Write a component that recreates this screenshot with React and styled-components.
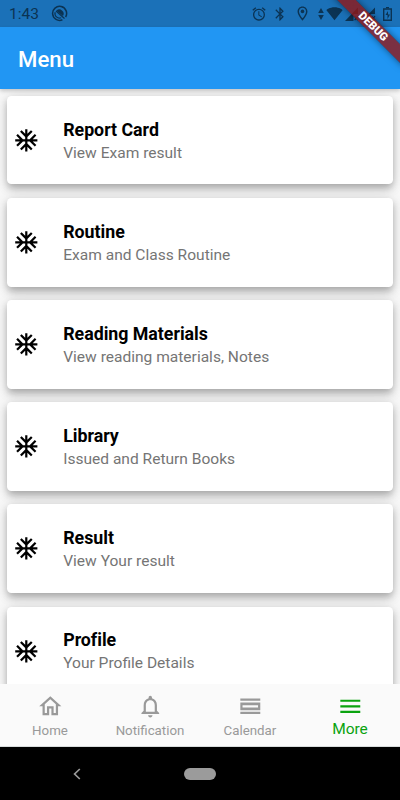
import React from "react";
import styled, { createGlobalStyle } from "styled-components";
import {
  MdAcUnit,
  MdOutlineHome,
  MdNotificationsNone,
  MdMenu,
  MdAlarm,
  MdBluetooth,
  MdOutlineLocationOn,
  MdSignalWifi4Bar,
} from "react-icons/md";

const menuItems = [
  { title: "Report Card", text: "View Exam result" },
  { title: "Routine", text: "Exam and Class Routine" },
  { title: "Reading Materials", text: "View reading materials, Notes" },
  { title: "Library", text: "Issued and Return Books" },
  { title: "Result", text: "View Your result" },
  { title: "Profile", text: "Your Profile Details" },
];

const tabs = [
  { label: "Home", icon: <MdOutlineHome /> },
  { label: "Notification", icon: <MdNotificationsNone /> },
  { label: "Calendar", icon: <CalendarIcon /> },
  { label: "More", icon: <MdMenu />, active: true },
];

export default function App() {
  return (
    <Screen>
      <GlobalStyle />
      <StatusBar>
        <Clock>1:43</Clock>
        <AppMark />
        <StatusIcons />
      </StatusBar>
      <Header>
        <HeaderTitle>Menu</HeaderTitle>
      </Header>
      <List>
        {menuItems.map((item) => (
          <Card key={item.title}>
            <CardIcon>
              <MdAcUnit />
            </CardIcon>
            <CardBody>
              <CardTitle>{item.title}</CardTitle>
              <CardText>{item.text}</CardText>
            </CardBody>
          </Card>
        ))}
      </List>
      <TabBar>
        {tabs.map((tab) => (
          <Tab key={tab.label} $active={tab.active}>
            {tab.icon}
            <TabLabel $active={tab.active}>{tab.label}</TabLabel>
          </Tab>
        ))}
      </TabBar>
      <SystemNav>
        <BackIcon viewBox="0 0 8 12">
          <path d="M6.8 1 1.6 6l5.2 5" />
        </BackIcon>
        <HomePill />
        <span />
      </SystemNav>
      <Debug>
        <DebugBand>DEBUG</DebugBand>
      </Debug>
    </Screen>
  );
}

function AppMark() {
  return (
    <svg width="17" height="17" viewBox="0 0 17 17" fill="none" stroke="currentColor">
      <path d="M11.4 14.8A7 7 0 1 1 14.6 12" strokeWidth="1.5" />
      <path d="M5.4 5.8a4.2 4.2 0 0 1 6.6 5.1z" fill="currentColor" stroke="none" />
      <path d="M4.2 7.2a4.5 4.5 0 0 0 6 5.5" strokeWidth="1.2" />
      <path d="M5 6l8.5 7.5" strokeWidth="1.2" />
    </svg>
  );
}

function SignalIcon() {
  return (
    <svg width="14" height="14" viewBox="0 0 14 14" fill="currentColor">
      <path d="M0 14L13 .5V7H8.5v7z" />
      <path d="M9.6 9.2l3.4 4M13 9.2l-3.4 4" stroke="currentColor" strokeWidth="1.2" />
    </svg>
  );
}

function StatusIcons() {
  return (
    <IconRow>
      <Slot $gap={0}>
        <MdAlarm size={16} />
      </Slot>
      <Slot $gap={5}>
        <MdBluetooth size={16} />
      </Slot>
      <Slot $gap={6.5}>
        <MdOutlineLocationOn size={17} />
      </Slot>
      <Slot $gap={7}>
        <svg width="6" height="12" viewBox="0 0 6 12" fill="currentColor">
          <path d="M3 0l2.8 5H.2zM3 12L.2 7h5.6z" />
        </svg>
      </Slot>
      <Slot $gap={2}>
        <MdSignalWifi4Bar size={17} />
      </Slot>
      <Slot $gap={2}>
        <SignalIcon />
      </Slot>
      <Slot $gap={3}>
        <SignalIcon />
      </Slot>
      <Slot $gap={7}>
        <svg width="9" height="14" viewBox="0 0 9 14" fill="none" stroke="currentColor">
          <path d="M.7 2h7.6v11.3H.7z" strokeWidth="1.4" />
          <path d="M3 .6h3" strokeWidth="1.2" />
          <path d="M5 4L2.5 8h2v4L7 7.5H5z" fill="currentColor" stroke="none" />
        </svg>
      </Slot>
    </IconRow>
  );
}

function CalendarIcon() {
  return (
    <svg viewBox="0 0 24 24" fill="currentColor">
      <path d="M3 5h18v2H3zM3 17h18v2H3z" />
      <path fillRule="evenodd" d="M3 8.5h18v7H3zM5 11v2h14v-2z" />
    </svg>
  );
}

const GlobalStyle = createGlobalStyle`
  * {
    box-sizing: border-box;
  }
  body {
    margin: 0;
    overflow: hidden;
    font-family: Roboto, "Liberation Sans", sans-serif;
  }
`;
const Screen = styled.div`
  position: relative;
  display: flex;
  flex-direction: column;
  width: 400px;
  height: 800px;
  overflow: hidden;
  background: #f8f8f8;
`;
const StatusBar = styled.div`
  display: flex;
  align-items: center;
  flex: 0 0 27px;
  padding: 0 8px 0 9px;
  color: #0b3353;
  background: #1b71b8;
`;
const Clock = styled.span`
  width: 42px;
  font-size: 15.5px;
`;
const IconRow = styled.div`
  display: flex;
  align-items: center;
  margin-left: auto;
`;
const Slot = styled.span`
  display: flex;
  margin-left: ${(props) => props.$gap}px;
`;
const Header = styled.header`
  position: relative;
  z-index: 1;
  display: flex;
  align-items: center;
  flex: 0 0 62px;
  padding: 1px 18px 0;
  color: #fff;
  background: #2196f3;
  box-shadow: 0 2px 4px rgba(0, 0, 0, 0.2);
`;
const HeaderTitle = styled.h1`
  margin: 0;
  font-size: 22.2px;
  font-weight: 500;
`;
const List = styled.main`
  display: flex;
  flex-direction: column;
  flex: 1;
  gap: 13.3px;
  min-height: 0;
  padding: 6.6px 6.6px 0;
  overflow: hidden;
`;
const Card = styled.section`
  display: flex;
  align-items: center;
  flex: 0 0 88.9px;
  padding-left: 6.6px;
  border-radius: 4.4px;
  background: #fff;
  box-shadow: 0 3.3px 6px -1px rgba(0, 0, 0, 0.17),
    0 5.5px 10px rgba(0, 0, 0, 0.13), 0 1px 15px rgba(0, 0, 0, 0.12);
`;
const CardIcon = styled.div`
  width: 50px;
  height: 26.6px;
  font-size: 26.6px;
  line-height: 0;
`;
const CardBody = styled.div`
  padding-top: 3px;
`;
const CardTitle = styled.h2`
  margin: 0;
  font-size: 17.8px;
  font-weight: 700;
  line-height: 22px;
  letter-spacing: -0.02px;
  color: #000;
`;
const CardText = styled.p`
  margin: 0;
  padding-top: 1px;
  font-size: 15.55px;
  line-height: 23px;
  color: #757575;
`;
const TabBar = styled.nav`
  display: flex;
  position: relative;
  flex: 0 0 63px;
  background: #fafafa;
  border-bottom: 1px solid #d8dcdc;
`;
const Tab = styled.div`
  display: flex;
  flex-direction: column;
  align-items: center;
  flex: 1;
  padding-top: 9.4px;
  color: ${(props) => (props.$active ? "#0aa30f" : "#999")};
  svg {
    width: 26.6px;
    height: 26.6px;
    flex: none;
  }
`;
const TabLabel = styled.span`
  margin-top: ${(props) => (props.$active ? "-1px" : "1px")};
  font-size: ${(props) => (props.$active ? "15.5px" : "13.3px")};
  line-height: 20px;
`;
const SystemNav = styled.div`
  display: grid;
  grid-template-columns: 1fr 32px 1fr;
  align-items: center;
  flex: 0 0 53px;
  background: #000;
`;
const BackIcon = styled.svg`
  width: 8px;
  height: 12px;
  margin-left: 73px;
  fill: none;
  stroke: #999;
  stroke-width: 1.7;
`;
const HomePill = styled.span`
  height: 12px;
  border-radius: 6px;
  background: #9b9b9b;
`;
const Debug = styled.div`
  position: absolute;
  top: 0;
  right: 0;
  z-index: 2;
  width: 80px;
  height: 80px;
  overflow: hidden;
`;
const DebugBand = styled.span`
  position: absolute;
  top: 20px;
  left: 3.3px;
  width: 100px;
  height: 13.3px;
  font-size: 11.3px;
  font-weight: 900;
  line-height: 13.3px;
  text-align: center;
  color: #fff;
  background: linear-gradient(rgba(183, 28, 28, 0.63), rgba(183, 28, 28, 0.63)),
    rgba(0, 0, 0, 0.45);
  box-shadow: 0 0 7px rgba(0, 0, 0, 0.5);
  transform: rotate(45deg);
`;
